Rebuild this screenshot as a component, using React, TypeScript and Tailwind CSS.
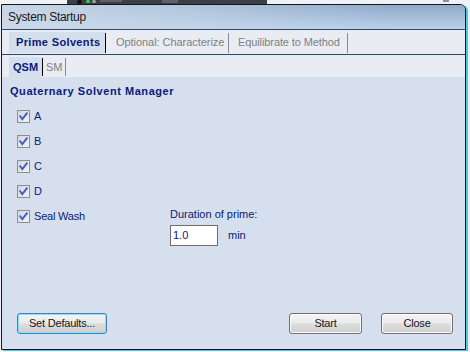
import React from "react";

const navy = "text-[#0c1a7a]";

function Check() {
  return (
    <svg width="13" height="13" viewBox="0 0 13 13" className="shrink-0">
      <defs>
        <linearGradient id="cbg" x1="0" y1="0" x2="1" y2="1">
          <stop offset="0" stopColor="#d2d4d8" />
          <stop offset="1" stopColor="#f4f4f4" />
        </linearGradient>
      </defs>
      <rect x="0.5" y="0.5" width="12" height="12" fill="url(#cbg)" stroke="#8c8e91" />
      <path d="M3.2 6.2 L5.3 9.2 L9.8 3.4" stroke="#3d5fc8" strokeWidth="1.9" fill="none" strokeLinecap="square" />
    </svg>
  );
}

function CheckRow({ label, className = "" }: { label: string; className?: string }) {
  return (
    <div className={`h-[25px] flex items-center gap-[4px] ${className}`}>
      <Check />
      <span className={`text-[11px] leading-[13px] tracking-[-0.2px] ${navy}`}>{label}</span>
    </div>
  );
}

function Btn({ label, w, focus = false, className = "" }: { label: string; w: string; focus?: boolean; className?: string }) {
  return (
    <div
      className={`${w} h-[21px] rounded-[3px] border flex items-center justify-center text-[11px] tracking-[-0.2px] text-[#151515] bg-[linear-gradient(to_bottom,#f4f4f4_0%,#ebebeb_45%,#dcdcdc_55%,#d0d0d0_100%)] ${
        focus ? "border-[#3c86bd] shadow-[inset_0_0_0_1px_#86e0fb]" : "border-[#707070] shadow-[inset_0_0_0_1px_#fbfbfb]"
      } ${className}`}
    >
      {label}
    </div>
  );
}

export default function App() {
  return (
    <div
      className="w-[470px] h-[352px] bg-[#eef1f6] overflow-hidden"
      style={{ fontFamily: '"Liberation Sans", Arial, sans-serif' }}
    >
      {/* desktop strip above window */}
      <div className="h-[4px] flex">
        <div className="ml-[67px] w-[200px] h-full bg-[#3a3f48] flex items-start">
          <div className="ml-[10px] w-[5px] h-[4px] rounded-full bg-[#111]" />
          <div className="ml-[4px] w-[4px] h-[3px] rounded-full bg-[#2fd04a]" />
          <div className="ml-[2px] w-[4px] h-[3px] rounded-full bg-[#9aa0a8]" />
          <div className="ml-[4px] w-[22px] h-[2px] bg-[#5c636e]" />
          <div className="ml-[40px] w-[16px] h-[3px] bg-[#5a616c]" />
        </div>
        <div className="ml-[176px] w-[6px] h-[2px] bg-[#8a8f98]" />
      </div>

      {/* window */}
      <div className="ml-[1px] w-[465px] h-[346px] border border-[#161616] rounded-tr-[6px] shadow-[2px_1px_0_#4cc7e6] flex flex-col overflow-hidden bg-[#d5dfed]">
        {/* title */}
        <div className="h-[24px] shrink-0 flex items-center pl-[6px] bg-[linear-gradient(to_right,rgba(205,218,234,0.9)_0%,rgba(205,218,234,0.55)_40%,rgba(205,218,234,0)_85%),linear-gradient(to_bottom,#8ea9c9,#bad0ea)]">
          <span className="text-[12px] tracking-[-0.3px] text-[#1a1a1a]">System Startup</span>
        </div>
        <div className="h-px shrink-0 bg-[#2b4868]" />

        {/* main tabs */}
        <div className="h-[24px] shrink-0 flex items-end pb-[1px] pl-[7px] bg-[#e9edf3]">
          <div className={`w-[96px] h-[21px] bg-[#d4deec] flex items-center pl-[7px] text-[11px] font-bold tracking-[0.35px] ${navy}`}>
            Prime Solvents
          </div>
          <div className="w-px h-[20px] bg-black" />
          <div className="w-[122px] h-[21px] flex items-center pl-[10px] text-[11px] tracking-[-0.05px] text-[#808080]">
            Optional: Characterize
          </div>
          <div className="w-px h-[20px] bg-[#8a8a8a]" />
          <div className="w-[118px] h-[21px] flex items-center pl-[9px] text-[11px] tracking-[-0.1px] text-[#808080]">
            Equilibrate to Method
          </div>
          <div className="w-px h-[20px] bg-[#8a8a8a]" />
        </div>
        <div className="h-px shrink-0 bg-[#2b4868]" />

        {/* sub tabs */}
        <div className="h-[22px] shrink-0 flex items-end pl-[7px] bg-[#e9edf3]">
          <div className={`w-[33px] h-[20px] bg-[#d5dfed] flex items-center pl-[4px] text-[11px] font-bold ${navy}`}>QSM</div>
          <div className="w-px h-[18px] mb-[1px] bg-black" />
          <div className="w-[22px] h-[20px] flex items-center pl-[3px] text-[11px] text-[#808080]">SM</div>
          <div className="w-px h-[18px] mb-[1px] bg-[#8a8a8a]" />
        </div>

        {/* content */}
        <div className="flex-1 flex flex-col bg-[#d5dfed]">
          <div className={`pt-[7px] pl-[8px] text-[11px] leading-[14px] font-bold tracking-[0.55px] ${navy}`}>
            Quaternary Solvent Manager
          </div>
          <div className="mt-[6px] pl-[15px] flex flex-col">
            <CheckRow label="A" />
            <CheckRow label="B" />
            <CheckRow label="C" />
            <CheckRow label="D" />
            <div className="flex items-start">
              <CheckRow label="Seal Wash" className="w-[153px]" />
              <div className="flex flex-col">
                <div className={`mt-[3px] text-[11px] leading-[14px] tracking-[0px] ${navy}`}>Duration of prime:</div>
                <div className="mt-[4px] flex items-center">
                  <div className={`w-[48px] h-[21px] bg-white border border-[#6d6d6d] flex items-center pl-[2px] text-[11px] ${navy}`}>
                    1.0
                  </div>
                  <span className={`ml-[10px] text-[11px] ${navy}`}>min</span>
                </div>
              </div>
            </div>
          </div>

          {/* footer */}
          <div className="mt-auto flex pl-[15px] pr-[12px] pb-[15px]">
            <Btn label="Set Defaults..." w="w-[90px]" focus />
            <Btn label="Start" w="w-[73px]" className="ml-auto" />
            <Btn label="Close" w="w-[72px]" className="ml-[19px]" />
          </div>
        </div>
      </div>
    </div>
  );
}
